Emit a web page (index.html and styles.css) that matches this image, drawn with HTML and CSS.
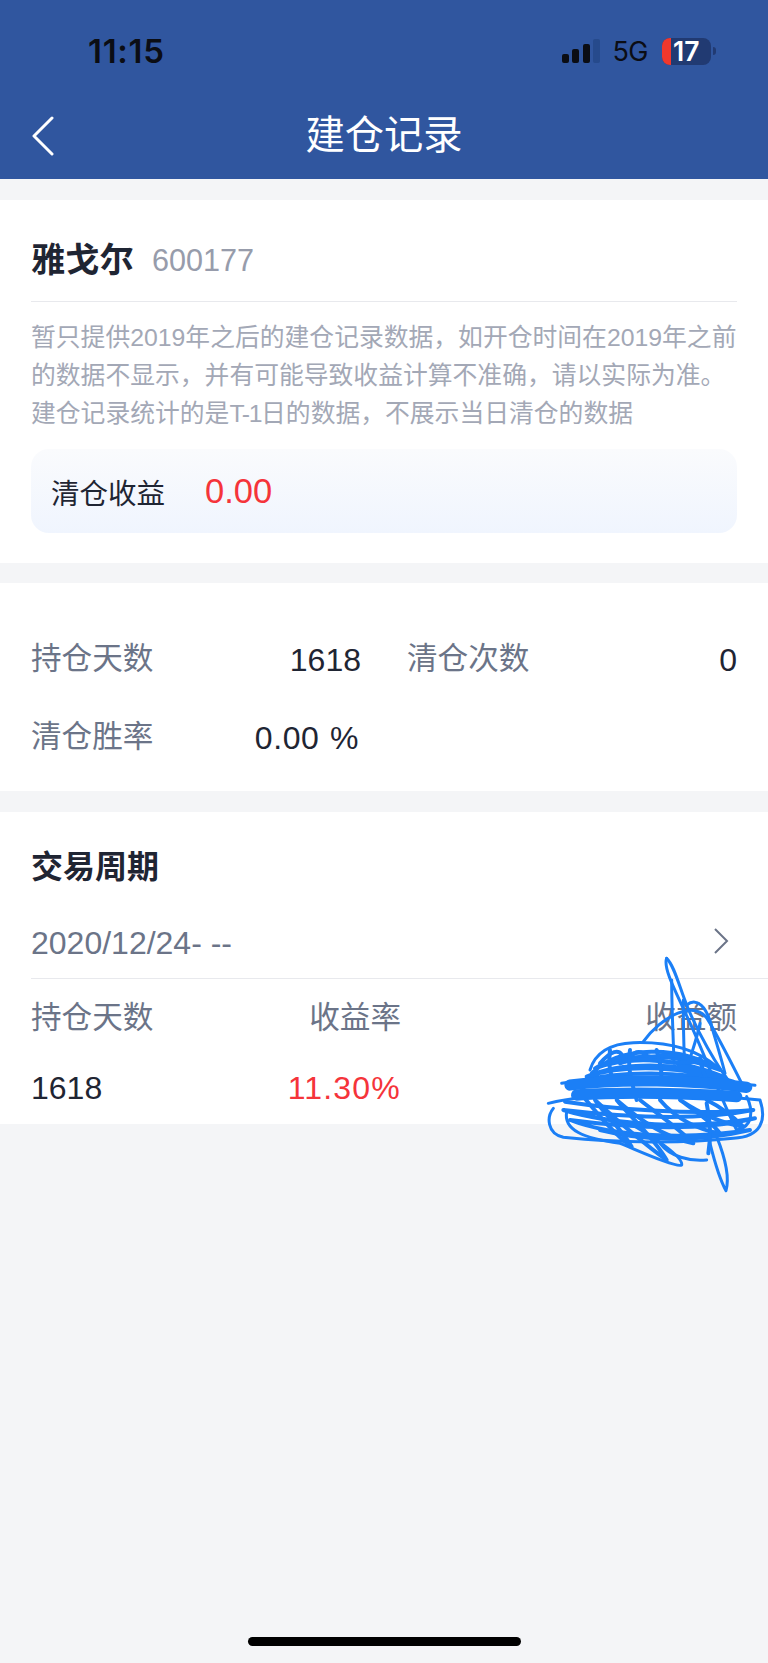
FILE: index.html
```html
<!DOCTYPE html>
<html lang="zh-CN">
<head>
    <meta charset="UTF-8">
    <meta name="viewport" content="width=device-width, initial-scale=1.0">
    <title>建仓记录</title>
    <link rel="stylesheet" href="styles.css">
</head>
<body>
    <div class="page">
        <header class="topbar">
            <div class="status">
                <span class="clock">11:15</span>
                <div class="status-right">
                    <div class="signal"><i class="s1"></i><i class="s2"></i><i class="s3"></i><i class="s4"></i></div>
                    <span class="net">5G</span>
                    <div class="battery"><span class="battery-low"></span><span class="battery-num">17</span></div>
                    <span class="battery-nub"></span>
                </div>
            </div>
            <div class="nav">
                <svg class="back" width="24" height="40" viewBox="0 0 24 40"><path d="M21 2 L3 20 L21 38" fill="none" stroke="#fff" stroke-width="3" stroke-linecap="round" stroke-linejoin="round"/></svg>
                <h1 class="nav-title">建仓记录</h1>
            </div>
        </header>

        <section class="card card-stock">
            <div class="stock">
                <span class="stock-name">雅戈尔</span>
                <span class="stock-code">600177</span>
            </div>
            <p class="note">暂只提供2019年之后的建仓记录数据，如开仓时间在2019年之前<br>的数据不显示，并有可能导致收益计算不准确，请以实际为准。<br>建仓记录统计的是<span class="tight">T-1</span>日的数据，不展示当日清仓的数据</p>
            <div class="profit">
                <span class="profit-label">清仓收益</span>
                <span class="profit-value">0.00</span>
            </div>
        </section>

        <section class="card card-stats">
            <div class="stat"><span class="stat-label">持仓天数</span><span class="stat-value">1618</span></div>
            <div class="stat"><span class="stat-label">清仓次数</span><span class="stat-value">0</span></div>
            <div class="stat stat-rate"><span class="stat-label">清仓胜率</span><span class="stat-value">0.00 %</span></div>
        </section>

        <section class="card card-period">
            <h2 class="period-title">交易周期</h2>
            <div class="period-date">
                <span>2020/12/24- --</span>
                <svg class="more" width="16" height="28" viewBox="0 0 16 28"><path d="M2 2 L14 14 L2 26" fill="none" stroke="#6b7488" stroke-width="2"/></svg>
            </div>
            <div class="period-table">
                <span class="head">持仓天数</span>
                <span class="head right">收益率</span>
                <span class="head right">收益额</span>
                <span class="cell">1618</span>
                <span class="cell right red">11.30%</span>
            </div>
        </section>

        <div class="home-bar"></div>

        <!-- blue pen scribble over the amount -->
        <svg class="scribble" width="248" height="270" viewBox="0 0 744 810" fill="none" stroke="#1b7ff6" stroke-width="9" stroke-linecap="round" stroke-linejoin="round">
            <path d="M440 85 C428 115 470 190 515 290 C560 390 600 500 650 600"/>
            <path d="M440 85 C462 105 478 170 500 225 C530 300 590 410 640 470"/>
            <path d="M455 150 C455 240 460 320 462 400"/>
            <path d="M490 210 C490 280 490 340 495 420"/>
            <path d="M370 335 C420 265 530 195 570 280 C610 350 640 410 670 470"/>
            <path d="M500 225 C530 200 560 230 575 290 C590 340 605 390 615 430"/>
            <path d="M540 280 C530 330 510 380 500 420"/>
            <path d="M570 640 C585 700 600 750 618 782 C630 740 610 670 590 620"/>
            <path d="M210 420 C225 370 270 340 340 338 C430 335 520 350 590 410"/>
            <path d="M85 520 C200 490 450 480 720 510 C740 570 725 620 640 625 C500 640 300 640 130 622 C80 610 80 560 100 535"/>
            <path d="M140 545 C130 600 190 625 300 640 C340 655 470 715 485 705 C490 680 400 620 320 575"/>
            <path d="M420 640 C450 680 510 695 560 690"/>
            <path d="M680 500 C700 540 700 590 650 600"/>
            <path d="M125 460 C240 440 450 440 705 466"/>
            <g class="scribble-fill" stroke-width="12">
                <path d="M215 430 C300 345 480 345 600 420 C480 370 300 365 225 415 C330 375 480 385 610 440 C470 395 300 395 200 440 C320 400 500 410 640 455 C480 425 300 420 180 455"/>
                <path d="M240 400 C270 365 300 350 310 385 C320 420 330 350 370 370 C400 400 440 350 520 395 C440 410 380 370 300 400"/>
                <path d="M135 515 C300 540 520 555 700 540 C520 575 300 560 130 540 C280 585 520 600 705 565 C520 610 300 590 150 570 C280 620 500 630 690 600 C520 640 360 630 240 600"/>
                <path d="M190 500 C240 560 290 620 335 650 C300 590 250 550 225 510 C290 570 370 640 440 690 C400 620 330 560 290 510 C360 570 430 620 520 640 C470 590 410 550 360 510"/>
                <path d="M420 510 C470 570 540 600 600 610 C570 570 520 540 480 510 C540 550 600 580 670 590 C640 560 600 530 560 510"/>
                <path d="M560 520 C575 590 570 640 565 670"/>
                <path d="M330 360 C320 420 340 470 350 510 M270 360 C265 400 270 430 280 450 M410 360 C420 400 430 430 420 460 M540 385 C545 410 550 430 560 450"/>
            </g>
            <g class="scribble-core" stroke-width="34">
                <path d="M150 465 C300 445 520 450 680 472"/>
                <path d="M170 495 C320 485 520 490 650 500"/>
            </g>
        </svg>
    </div>
</body>
</html>
```
FILE: styles.css
```css
* {
    box-sizing: border-box;
    margin: 0;
    padding: 0;
}

body {
    font-family: "Liberation Sans", "Noto Sans CJK SC", sans-serif;
    background-color: #f4f5f7;
    color: #1f2533;
}

.page {
    position: relative;
    display: flex;
    flex-direction: column;
    height: 1663px;
    overflow: hidden;
}

/* top bar */
.topbar {
    height: 179px;
    background-color: #30569f;
}
.status {
    display: flex;
    justify-content: space-between;
    align-items: center;
    height: 102px;
    padding: 0 52px 0 88px;
}
.clock {
    font-family: Inter, "Liberation Sans", sans-serif;
    font-size: 33px;
    font-weight: 600;
    letter-spacing: 0.7px;
    color: #0b0d14;
}
.status-right {
    display: flex;
    align-items: center;
}
.signal {
    display: flex;
    align-items: flex-end;
    gap: 3.5px;
    height: 24px;
    margin-right: 12px;
}
.signal i {
    display: block;
    width: 7px;
    border-radius: 2px;
    background-color: #0b0d14;
}
.s1 { height: 9px; }
.s2 { height: 14px; }
.s3 { height: 19px; }
.signal .s4 {
    height: 24px;
    background-color: #264a8c;
}
.net {
    font-family: Inter, "Liberation Sans", sans-serif;
    font-size: 27px;
    letter-spacing: -0.5px;
    color: #0b0d14;
    margin-right: 14px;
}
.battery {
    display: flex;
    align-items: center;
    width: 49px;
    height: 27px;
    border-radius: 8px;
    background-color: #213a72;
}
.battery-low {
    width: 9px;
    height: 100%;
    border-radius: 8px 0 0 8px;
    background-color: #f0382d;
}
.battery-num {
    margin-left: 2px;
    font-family: Inter, "Liberation Sans", sans-serif;
    font-size: 26.5px;
    font-weight: 600;
    line-height: 27px;
    color: #fff;
}
.battery-nub {
    width: 3px;
    height: 8px;
    margin-left: 2px;
    border-radius: 0 3px 3px 0;
    background-color: #213a72;
}
.nav {
    position: relative;
    display: flex;
    justify-content: center;
    align-items: center;
    height: 66px;
}
.back {
    position: absolute;
    left: 31px;
    top: 14px;
}
.nav-title {
    font-size: 39.3px;
    font-weight: normal;
    line-height: 66px;
    color: #fff;
}

/* cards */
.card {
    background-color: #fff;
}
.card-stock {
    margin-top: 21px;
    padding: 30px 31px;
    height: 363px;
}
.stock {
    display: flex;
    align-items: center;
    gap: 18px;
    height: 60px;
    margin-bottom: 11px;
}
.stock-name {
    padding-bottom: 6px;
    font-size: 34.3px;
    font-weight: bold;
}
.stock-code {
    font-size: 30.6px;
    color: #979cab;
}
.note {
    border-top: 1px solid #e8e9ed;
    padding-top: 17px;
    font-size: 24.8px;
    line-height: 38px;
    color: #a3a8b6;
    white-space: nowrap;
}
.tight {
    letter-spacing: -1.4px;
}
.profit {
    display: flex;
    align-items: center;
    height: 84px;
    margin-top: 16px;
    padding: 0 20px;
    border-radius: 18px;
    background: linear-gradient(#fafbfd, #f0f5fe);
}
.profit-label {
    width: 154px;
    font-size: 28.5px;
}
.profit-value {
    font-size: 34.5px;
    color: #f5343a;
}

.card-stats {
    display: grid;
    grid-template-columns: 330px 330px;
    grid-auto-rows: 78px;
    column-gap: 46px;
    align-items: center;
    height: 208px;
    margin-top: 20px;
    padding: 36px 31px 16px;
}
.stat {
    display: flex;
    justify-content: space-between;
    align-items: center;
}
.stat-label {
    padding-bottom: 4px;
    font-size: 30.6px;
    color: #6b7488;
}
.stat-value {
    padding-top: 4px;
    font-size: 32px;
}
.stat-rate .stat-value {
    margin-right: 2px;
    letter-spacing: 0.6px;
    word-spacing: 1px;
}

.card-period {
    height: 312px;
    margin-top: 21px;
    padding: 30px 0 16px 31px;
}
.period-title {
    font-size: 32px;
    line-height: 50px;
}
.period-date {
    display: flex;
    justify-content: space-between;
    align-items: center;
    height: 87px;
    padding: 16px 39px 0 0;
    border-bottom: 1px solid #e8e9ed;
    font-size: 32px;
    color: #6b7488;
}
.more {
    margin-bottom: 4px;
}
.period-table {
    display: grid;
    grid-template-columns: 185px 185px 336px;
    grid-auto-rows: 40px;
    row-gap: 31px;
    align-items: center;
    margin-top: 16px;
}
.head {
    font-size: 30.6px;
    color: #6b7488;
}
.cell {
    padding-top: 4px;
    font-size: 32px;
}
.right {
    text-align: right;
}
.red {
    letter-spacing: 1.2px;
    color: #f5343a;
}

.home-bar {
    width: 273px;
    height: 9px;
    margin: auto auto 17px;
    border-radius: 5px;
    background-color: #000;
}

.scribble {
    position: absolute;
    left: 520px;
    top: 930px;
}
```
